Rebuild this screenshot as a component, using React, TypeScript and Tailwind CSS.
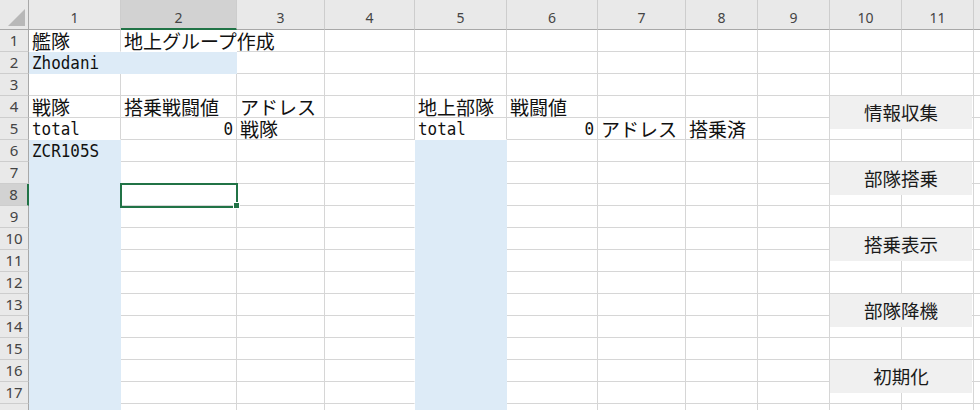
const COL_COUNT = 12
const ROW_COUNT = 18

type Cell = { t: string; en?: boolean; right?: boolean }

const CELLS: Record<string, Cell> = {
  '1-1': { t: '艦隊' },
  '1-2': { t: '地上グループ作成' },
  '2-1': { t: 'Zhodani', en: true },
  '4-1': { t: '戦隊' },
  '4-2': { t: '搭乗戦闘値' },
  '4-3': { t: 'アドレス' },
  '4-5': { t: '地上部隊' },
  '4-6': { t: '戦闘値' },
  '5-1': { t: 'total', en: true },
  '5-2': { t: '0', en: true, right: true },
  '5-3': { t: '戦隊' },
  '5-5': { t: 'total', en: true },
  '5-6': { t: '0', en: true, right: true },
  '5-7': { t: 'アドレス' },
  '5-8': { t: '搭乗済' },
  '6-1': { t: 'ZCR105S', en: true },
}

const BUTTONS = [
  { label: '情報収集', top: 'top-[96px]' },
  { label: '部隊搭乗', top: 'top-[162px]' },
  { label: '搭乗表示', top: 'top-[228px]' },
  { label: '部隊降機', top: 'top-[294px]' },
  { label: '初期化', top: 'top-[360px]' },
]

const SEL_COL = 2
const SEL_ROW = 8

// light blue fill on a few ranges
const filled = (r: number, c: number) =>
  (r === 2 && (c === 1 || c === 2)) || (r >= 6 && (c === 1 || c === 5))

function CornerCell() {
  return (
    <div className="relative bg-[#e9e9e9] border-r border-b border-r-[#a8a8a8] border-b-[#a8a8a8]">
      <svg className="absolute left-0 top-0" width="29" height="30" viewBox="0 0 29 30">
        <polygon points="8,26 25,26 25,9" fill="#b8b8b8" />
      </svg>
    </div>
  )
}

function ColHeader({ c }: { c: number }) {
  const sel = c === SEL_COL
  return (
    <div
      className={
        'flex items-center justify-center pt-[6px] border-r border-r-[#cdcdcd] text-[14px] text-[#444] font-["Noto_Sans"] ' +
        (sel ? 'bg-[#d2d2d2] border-b-2 border-b-[#217346]' : 'bg-[#e9e9e9] border-b border-b-[#a8a8a8]')
      }
    >
      {c < COL_COUNT ? c : ''}
    </div>
  )
}

function RowHeader({ r }: { r: number }) {
  const sel = r === SEL_ROW
  return (
    <div
      className={
        'flex items-center justify-center border-b border-b-[#cdcdcd] text-[15px] leading-none text-[#444] font-["Noto_Sans"] ' +
        (sel ? 'bg-[#d2d2d2] border-r-2 border-r-[#217346]' : 'bg-[#e9e9e9] border-r border-r-[#a8a8a8]')
      }
    >
      {r}
    </div>
  )
}

function DataCell({ r, c }: { r: number; c: number }) {
  const cell = CELLS[`${r}-${c}`]
  const fill = filled(r, c)
  const hideR = fill || filled(r, c + 1) || (r === 1 && c === 2)
  const hideB = fill || filled(r + 1, c)
  const rCls = hideR ? (fill ? 'border-r-[#ddebf7]' : 'border-r-white') : 'border-r-[#d6d6d6]'
  const bCls = hideB ? (fill ? 'border-b-[#ddebf7]' : 'border-b-white') : 'border-b-[#d6d6d6]'
  return (
    <div
      className={
        'min-w-0 flex items-end whitespace-nowrap border-r border-b px-[3px] text-[#111] ' +
        rCls + ' ' + bCls + ' ' +
        (fill ? 'bg-[#ddebf7] ' : '') +
        (cell?.right ? 'justify-end ' : '')
      }
    >
      {cell &&
        (cell.en ? (
          // narrow half-width latin, like the sheet's gothic font
          <span
            className={
              'inline-block font-["DejaVu_Sans_Mono"] text-[18.5px] leading-[20px] scale-x-[0.86] ' +
              (cell.right ? 'origin-right' : 'origin-left')
            }
          >
            {cell.t}
          </span>
        ) : (
          <span className='inline-block h-[20px] font-["Noto_Sans_CJK_JP",sans-serif] text-[19px] leading-[20px]'>
            {cell.t}
          </span>
        ))}
    </div>
  )
}

export default function App() {
  const rows = Array.from({ length: ROW_COUNT }, (_, i) => i + 1)
  const cols = Array.from({ length: COL_COUNT }, (_, i) => i + 1)

  return (
    <div className="relative w-[980px] h-[410px] overflow-hidden bg-white">
      <div className="grid grid-cols-[29px_92px_116px_88px_90px_92px_91px_88px_72px_72px_72px_72px_72px] grid-rows-[30px_repeat(18,22px)]">
        <CornerCell />
        {cols.map((c) => (
          <ColHeader key={c} c={c} />
        ))}
        {rows.map((r) => [
          <RowHeader key={`h${r}`} r={r} />,
          ...cols.map((c) => <DataCell key={`${r}-${c}`} r={r} c={c} />),
        ])}
      </div>

      {/* active cell */}
      <div className="absolute left-[120px] top-[183px] w-[118px] h-[25px] border-2 border-[#217346]" />
      <div className="absolute left-[233px] top-[202px] w-[7px] h-[7px] bg-[#217346] border border-white" />

      {/* macro buttons */}
      {BUTTONS.map((b) => (
        <div
          key={b.label}
          className={
            'absolute left-[830px] w-[142px] h-[33px] flex items-center justify-center bg-[#f0f0f0] text-[18.5px] text-[#1a1a1a] font-["Noto_Sans_CJK_JP",sans-serif] ' +
            b.top
          }
        >
          {b.label}
        </div>
      ))}
    </div>
  )
}
